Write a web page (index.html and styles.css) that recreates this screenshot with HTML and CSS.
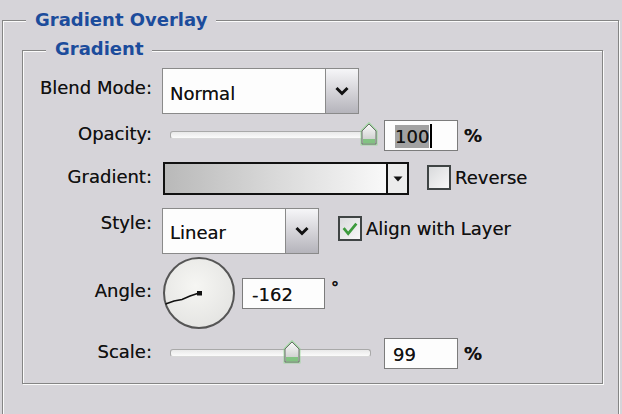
FILE: index.html
```html
<!DOCTYPE html>
<html>
<head>
<meta charset="utf-8">
<link rel="stylesheet" href="styles.css">
</head>
<body>
<div class="panel">
  <div class="group outer">
    <div class="group-title outer-title">Gradient Overlay</div>
    <div class="group inner">
      <div class="group-title inner-title">Gradient</div>
      <div class="form">
        <div class="label l-blend">Blend Mode:</div>
        <div class="ctrl">
          <div class="select select-blend">
            <div class="select-text">Normal</div>
            <div class="select-btn">
              <svg width="14" height="10" viewBox="0 0 14 10"><polyline points="1.5,2 7,7.5 12.5,2" fill="none" stroke="#111" stroke-width="3"/></svg>
            </div>
          </div>
        </div>

        <div class="label l-opacity">Opacity:</div>
        <div class="ctrl">
          <div class="slider">
            <div class="track"></div>
            <svg class="thumb" style="left:190px" width="18" height="24" viewBox="0 0 18 24">
              <defs><linearGradient id="tg1" x1="0" y1="0" x2="0" y2="1"><stop offset="0" stop-color="#fbfbfb"/><stop offset="1" stop-color="#c4c6c4"/></linearGradient></defs>
              <path d="M2 9 L9 2 L16 9 L16 22 L2 22 Z" fill="none" stroke="#8fd88f" stroke-width="3" opacity="0.7"/>
              <path d="M2 9 L9 2 L16 9 L16 22 L2 22 Z" fill="url(#tg1)" stroke="#6a6e6a" stroke-width="1"/>
              <rect x="3" y="17" width="12" height="4.5" fill="#6fbf6f" opacity="0.8"/>
            </svg>
          </div>
          <div class="num num-opacity"><span class="sel">100</span><span class="caret"></span></div>
          <div class="unit">%</div>
        </div>

        <div class="label l-gradient">Gradient:</div>
        <div class="ctrl">
          <div class="gradbar">
            <div class="gradfill"></div>
            <div class="gradbtn">
              <svg width="10" height="6" viewBox="0 0 10 6"><polygon points="0.5,0.5 9.5,0.5 5,5.5" fill="#111"/></svg>
            </div>
          </div>
          <div class="check check-reverse"></div>
          <div class="check-label">Reverse</div>
        </div>

        <div class="label l-style">Style:</div>
        <div class="ctrl">
          <div class="select select-style">
            <div class="select-text">Linear</div>
            <div class="select-btn">
              <svg width="14" height="10" viewBox="0 0 14 10"><polyline points="1.5,2 7,7.5 12.5,2" fill="none" stroke="#111" stroke-width="3"/></svg>
            </div>
          </div>
          <div class="check check-align">
            <svg width="22" height="22" viewBox="0 0 22 22"><polyline points="4,10 9,16 18,5" fill="none" stroke="#3d9b3d" stroke-width="3"/></svg>
          </div>
          <div class="check-label">Align with Layer</div>
        </div>

        <div class="label l-angle">Angle:</div>
        <div class="ctrl">
          <svg class="dial" width="74" height="74" viewBox="0 0 74 74">
            <defs><radialGradient id="dg" cx="0.45" cy="0.4" r="0.7"><stop offset="0" stop-color="#f6f6f3"/><stop offset="1" stop-color="#e2e2e0"/></radialGradient></defs>
            <circle cx="37" cy="37" r="35" fill="url(#dg)" stroke="#555" stroke-width="2"/>
            <polyline points="3.5,48 12,45 20,43.5 28,40 37,37" fill="none" stroke="#111" stroke-width="1.6"/>
            <rect x="35" y="35" width="5" height="4.5" fill="#111"/>
          </svg>
          <div class="num num-angle">-162</div>
          <div class="deg">°</div>
        </div>

        <div class="label l-scale">Scale:</div>
        <div class="ctrl">
          <div class="slider">
            <div class="track"></div>
            <svg class="thumb" style="left:113px" width="18" height="24" viewBox="0 0 18 24">
              <defs><linearGradient id="tg2" x1="0" y1="0" x2="0" y2="1"><stop offset="0" stop-color="#fbfbfb"/><stop offset="1" stop-color="#c4c6c4"/></linearGradient></defs>
              <path d="M2 9 L9 2 L16 9 L16 22 L2 22 Z" fill="none" stroke="#8fd88f" stroke-width="3" opacity="0.7"/>
              <path d="M2 9 L9 2 L16 9 L16 22 L2 22 Z" fill="url(#tg2)" stroke="#6a6e6a" stroke-width="1"/>
              <rect x="3" y="17" width="12" height="4.5" fill="#6fbf6f" opacity="0.8"/>
            </svg>
          </div>
          <div class="num num-scale">99</div>
          <div class="unit">%</div>
        </div>
      </div>
    </div>
  </div>
</div>
</body>
</html>
```

FILE: styles.css
```css
html, body {
  margin: 0;
  padding: 0;
  background: #d6d4d9;
  overflow: hidden;
  height: 414px;
}
body {
  font-family: "DejaVu Sans", Verdana, sans-serif;
  font-size: 18px;
  color: #111;
  text-shadow: 0 0 0.4px rgba(0, 0, 0, 0.6);
}
.panel {
  padding: 20px 0 0 2px;
}
.group {
  border: 1px solid #858585;
  box-shadow: inset 1px 1px 0 #fbfbfb, 1px 1px 0 #fbfbfb;
}
.outer {
  width: 615px;
  height: 393px;
  border-bottom: none;
}
.group-title {
  display: block;
  width: fit-content;
  background: #d6d4d9;
  color: #1c4c9c;
  font-weight: bold;
  line-height: 22px;
  height: 22px;
  padding: 0 9px;
  text-shadow: none;
}
.outer-title {
  margin: -12px 0 0 23px;
}
.inner {
  margin: 19px 0 0 19px;
  width: 579px;
  padding-bottom: 5px;
}
.inner-title {
  margin: -13px 0 0 23px;
}
.form {
  margin-top: 6px;
  display: grid;
  grid-template-columns: 129px 1fr;
  grid-template-rows: 50px 38px 49px 55px 70px 50px;
  column-gap: 10px;
  align-items: center;
}
.label {
  text-align: right;
  white-space: nowrap;
}
.l-blend { margin-bottom: 8px; }
.l-opacity { margin-bottom: 4px; }
.l-gradient { margin-bottom: 5px; }
.l-style { margin-bottom: 16px; }
.l-angle { margin-bottom: 6px; }
.l-scale { margin-bottom: 4px; }

.ctrl {
  display: flex;
  align-items: center;
  height: 100%;
}

.select {
  display: flex;
  background: #fdfdfd;
  border: 1px solid #8a8a8a;
  box-sizing: border-box;
}
.select-blend { width: 197px; height: 46px; }
.select-style { width: 157px; height: 46px; }
.select-text {
  flex: 1;
  display: flex;
  align-items: center;
  padding: 4px 0 0 7px;
}
.select-btn {
  width: 32px;
  border-left: 1px solid #8a8a8a;
  background: linear-gradient(#f6f6f8, #b5b4bb);
  display: flex;
  align-items: center;
  justify-content: center;
}

.slider {
  width: 212px;
  height: 26px;
  margin-left: 8px;
  position: relative;
}
.track {
  position: absolute;
  left: 0;
  top: 9px;
  width: 199px;
  height: 6px;
  border: 1px solid #a9a9a9;
  border-bottom-color: #d8d8d8;
  border-radius: 3px;
  background: linear-gradient(#e9e9e9, #fbfbfb);
}
.thumb {
  position: absolute;
  top: 0;
}

.num {
  width: 74px;
  height: 31px;
  box-sizing: border-box;
  border: 1px solid #7c7c7c;
  background: #fdfdfd;
  display: flex;
  align-items: center;
  padding-top: 2px;
}
.num-opacity { margin-left: 2px; padding-left: 10px; }
.num-scale { margin-left: 2px; padding-left: 8px; }
.num-angle { width: 83px; margin-left: 6px; padding-left: 9px; }
.sel {
  background: #a2a2a2;
  line-height: 23px;
}
.caret {
  width: 2px;
  height: 24px;
  background: #000;
  margin-left: 1px;
}
.unit {
  margin-left: 6px;
  font-weight: bold;
}
.deg {
  margin: 0 0 12px 6px;
  font-size: 16px;
  font-weight: bold;
  align-self: center;
}

.gradbar {
  width: 246px;
  height: 33px;
  box-sizing: border-box;
  margin-left: 1px;
  border: 2px solid #111;
  display: flex;
}
.gradfill {
  flex: 1;
  background: linear-gradient(to right, #b9b9b9, #f9f9f9);
}
.gradbtn {
  width: 19px;
  border-left: 2px solid #111;
  background: #ececec;
  display: flex;
  align-items: center;
  justify-content: center;
}

.check {
  width: 24px;
  height: 25px;
  box-sizing: border-box;
  border: 2px solid #3f4444;
  background: linear-gradient(135deg, #d9dadc, #f8f8f8);
  display: flex;
  align-items: center;
  justify-content: center;
}
.check-reverse { margin-left: 18px; margin-top: -2px; }
.check-align { margin-left: 19px; margin-top: -4px; }
.check-label {
  margin-left: 4px;
}
.check-reverse + .check-label { margin-top: -2px; }
.check-align + .check-label { margin-top: -4px; }

.dial {
  margin-left: 0;
}
```
